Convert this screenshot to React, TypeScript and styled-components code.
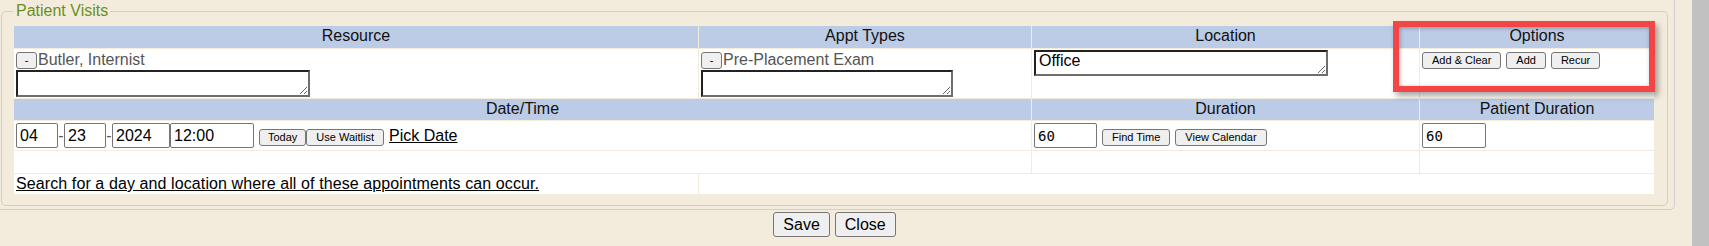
import React from "react";
import styled, { createGlobalStyle } from "styled-components";

const CREAM = "#f3ecdd";
const HEADER_BLUE = "#bccbe6";
const LINE = "#cfcfcf";

const GlobalStyle = createGlobalStyle`
  html, body { margin: 0; padding: 0; }
  body {
    background: ${CREAM};
    font-family: "Liberation Sans", Arial, sans-serif;
    font-size: 16px;
    line-height: 18px;
    color: #111;
  }
  * { box-sizing: border-box; }
`;

const Page = styled.div`
  position: relative;
  display: flex;
  width: 1709px;
  height: 246px;
  overflow: hidden;
  background: ${CREAM};
`;

const Main = styled.div`
  flex: 1;
  display: flex;
  flex-direction: column;
  align-items: flex-start;
`;

const Scrollbar = styled.div`
  width: 17px;
  flex: none;
  background: #c1c1c1;
`;

const Panel = styled.div`
  width: 1675px;
  padding: 2px 5px 3px 0;
  border-right: 1px solid ${LINE};
  border-bottom: 1px solid ${LINE};
  border-bottom-right-radius: 5px;
`;

const Fieldset = styled.fieldset`
  margin: 0 1px;
  padding: 6px 12px 11px;
  border: 1px solid ${LINE};
  border-radius: 5px;
  min-width: 0;
`;

const Legend = styled.legend`
  padding: 0 2px;
  color: #6b8e23;
  font-size: 16px;
  line-height: 18px;
`;

const FormGrid = styled.div`
  display: grid;
  grid-template-columns: 684px 332px 387px 234px;
  grid-template-rows: 22px 49px 21px 29px 22px 20px;
  gap: 1px;
`;

const HeaderCell = styled.div<{ $span?: number }>`
  grid-column: span ${(p) => p.$span ?? 1};
  background: ${HEADER_BLUE};
  color: #111;
  text-align: center;
  padding-top: 1px;
  white-space: nowrap;
`;

const Cell = styled.div<{ $span?: number }>`
  grid-column: span ${(p) => p.$span ?? 1};
  background: #fff;
  padding: 1px 2px;
  min-width: 0;
`;

const ItemLine = styled.div`
  display: flex;
  align-items: center;
  height: 19px;
  padding-top: 1px;
`;

const ItemName = styled.span`
  color: #555;
  margin-left: 1px;
  white-space: nowrap;
`;

const MiniButton = styled.button`
  width: 21px;
  height: 17px;
  padding: 0;
  font-family: "Liberation Sans", Arial, sans-serif;
  font-size: 11px;
  line-height: 15px;
  color: #000;
  background: #efefef;
  border: 1px solid #767676;
  border-radius: 3px;
`;

const NoteArea = styled.textarea<{ $w: number; $h: number; $top?: number }>`
  display: block;
  width: ${(p) => p.$w}px;
  height: ${(p) => p.$h}px;
  margin: ${(p) => p.$top ?? 1}px 0 0;
  padding: 0 3px;
  font-family: "Liberation Sans", Arial, sans-serif;
  font-size: 16px;
  line-height: 18px;
  color: #000;
  background: #fff;
  border: 2px solid;
  border-color: #222 #6d6d6d #6d6d6d #222;
  border-radius: 0;
  outline: none;
  overflow: hidden;
`;

const ButtonRow = styled.div`
  display: flex;
  gap: 5px;
  padding-top: 2px;
`;

const SmallButton = styled.button<{ $pad?: number }>`
  height: 17px;
  padding: 0 ${(p) => p.$pad ?? 9}px;
  font-family: "Liberation Sans", Arial, sans-serif;
  font-size: 11px;
  line-height: 15px;
  color: #000;
  background: #efefef;
  border: 1px solid #767676;
  border-radius: 3px;
  white-space: nowrap;
`;

const FieldRow = styled.div`
  display: flex;
  align-items: baseline;
  gap: 5px;
  padding-top: 1px;
`;

const Group = styled.div`
  display: flex;
  align-items: baseline;
`;

const TextInput = styled.input<{ $w: number; $mono?: boolean }>`
  width: ${(p) => p.$w}px;
  height: 25px;
  margin: 0;
  padding: 0 3px;
  font-family: ${(p) =>
    p.$mono ? `"DejaVu Sans Mono", monospace` : `"Liberation Sans", Arial, sans-serif`};
  font-size: ${(p) => (p.$mono ? 14 : 16)}px;
  color: #000;
  background: #fff;
  border: 1px solid #767676;
  border-radius: 2px;
  outline: none;
`;

const Sep = styled.span`
  width: 6px;
  text-align: center;
  color: #555;
`;

const TextLink = styled.a<{ $track?: number }>`
  color: #000;
  text-decoration: underline;
  white-space: nowrap;
  cursor: pointer;
  letter-spacing: ${(p) => p.$track ?? 0}px;
`;

const ButtonBar = styled.div`
  width: 1669px;
  display: flex;
  justify-content: center;
  gap: 5px;
  margin-top: 2px;
`;

const LargeButton = styled.button`
  height: 25px;
  padding: 0 9px;
  font-family: "Liberation Sans", Arial, sans-serif;
  font-size: 16px;
  color: #000;
  background: #efefef;
  border: 1px solid #767676;
  border-radius: 3px;
`;

const Highlight = styled.div`
  position: absolute;
  left: 1393px;
  top: 21px;
  width: 262px;
  height: 71px;
  border: 6px solid #f24646;
  box-shadow: 3px 4px 6px rgba(0, 0, 0, 0.35), inset 1px 1px 4px rgba(0, 0, 0, 0.3);
  pointer-events: none;
`;

export default function App() {
  return (
    <>
      <GlobalStyle />
      <Page>
        <Main>
          <Panel>
            <Fieldset>
              <Legend>Patient Visits</Legend>
              <FormGrid>
                <HeaderCell>Resource</HeaderCell>
                <HeaderCell>Appt Types</HeaderCell>
                <HeaderCell>Location</HeaderCell>
                <HeaderCell>Options</HeaderCell>

                <Cell>
                  <ItemLine>
                    <MiniButton>-</MiniButton>
                    <ItemName>Butler, Internist</ItemName>
                  </ItemLine>
                  <NoteArea $w={294} $h={27} defaultValue="" />
                </Cell>
                <Cell>
                  <ItemLine>
                    <MiniButton>-</MiniButton>
                    <ItemName>Pre-Placement Exam</ItemName>
                  </ItemLine>
                  <NoteArea $w={252} $h={27} defaultValue="" />
                </Cell>
                <Cell>
                  <NoteArea $w={294} $h={26} $top={0} defaultValue="Office" />
                </Cell>
                <Cell>
                  <ButtonRow>
                    <SmallButton>Add &amp; Clear</SmallButton>
                    <SmallButton>Add</SmallButton>
                    <SmallButton>Recur</SmallButton>
                  </ButtonRow>
                </Cell>

                <HeaderCell $span={2}>Date/Time</HeaderCell>
                <HeaderCell>Duration</HeaderCell>
                <HeaderCell>Patient Duration</HeaderCell>

                <Cell $span={2}>
                  <FieldRow>
                    <Group>
                      <TextInput $w={42} defaultValue="04" />
                      <Sep>-</Sep>
                      <TextInput $w={42} defaultValue="23" />
                      <Sep>-</Sep>
                      <TextInput $w={58} defaultValue="2024" />
                      <TextInput $w={84} defaultValue="12:00" />
                    </Group>
                    <Group>
                      <SmallButton $pad={8}>Today</SmallButton>
                      <SmallButton>Use Waitlist</SmallButton>
                    </Group>
                    <TextLink>Pick Date</TextLink>
                  </FieldRow>
                </Cell>
                <Cell>
                  <FieldRow>
                    <TextInput $w={63} $mono defaultValue="60" />
                    <SmallButton>Find Time</SmallButton>
                    <SmallButton>View Calendar</SmallButton>
                  </FieldRow>
                </Cell>
                <Cell>
                  <FieldRow>
                    <TextInput $w={64} $mono defaultValue="60" />
                  </FieldRow>
                </Cell>

                <Cell $span={2} />
                <Cell />
                <Cell />

                <Cell>
                  <TextLink $track={0.1}>
                    Search for a day and location where all of these appointments can occur.
                  </TextLink>
                </Cell>
                <Cell $span={3} />
              </FormGrid>
            </Fieldset>
          </Panel>
          <ButtonBar>
            <LargeButton>Save</LargeButton>
            <LargeButton>Close</LargeButton>
          </ButtonBar>
        </Main>
        <Scrollbar />
      </Page>
      <Highlight />
    </>
  );
}
